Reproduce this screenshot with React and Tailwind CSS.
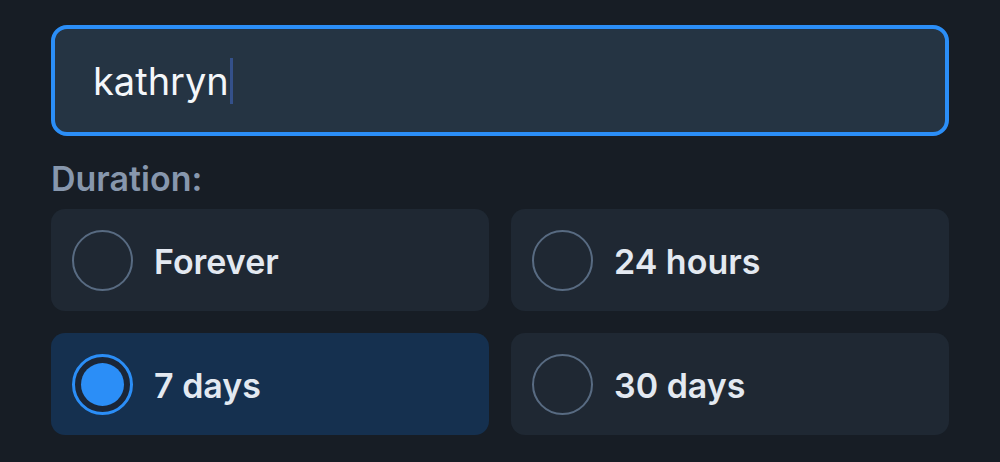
import React from "react";

function Option({ label, selected }) {
  return (
    <div
      className={`flex items-center h-[102px] rounded-[14px] pl-[21px] ${
        selected ? "bg-[#15304f]" : "bg-[#1f2833]"
      }`}
    >
      {selected ? (
        <div className="w-[61px] h-[61px] rounded-full border-[3px] border-[#2b8ef7] bg-[#1a2638] flex items-center justify-center">
          <div className="w-[43px] h-[43px] rounded-full bg-[#2b8ef7]" />
        </div>
      ) : (
        <div className="w-[61px] h-[61px] rounded-full border-[2px] border-[#586b82]" />
      )}
      <span className="ml-[21px] text-[34px] font-semibold text-[#e3e9f1] leading-[40px] mt-[3px]">
        {label}
      </span>
    </div>
  );
}

export default function App() {
  return (
    <div
      className="w-[1000px] h-[462px] bg-[#171d25] px-[51px] pt-[25px] overflow-hidden"
      style={{ fontFamily: "Inter, 'Noto Sans', sans-serif" }}
    >
      <div className="h-[111px] rounded-[16px] border-[4px] border-[#2b8ef7] bg-[#253443] flex items-center pl-[38px]">
        <span className="text-[38px] text-[#f4f7fa] leading-[46px]">kathryn</span>
        <span className="w-[3px] h-[46px] bg-[#34508a] ml-[1px]" />
      </div>
      <div className="mt-[23px] text-[34px] font-semibold text-[#8797ad] leading-[40px]">
        Duration:
      </div>
      <div className="mt-[10px] grid grid-cols-2 gap-x-[22px] gap-y-[22px]">
        <Option label="Forever" />
        <Option label="24 hours" />
        <Option label="7 days" selected />
        <Option label="30 days" />
      </div>
    </div>
  );
}
